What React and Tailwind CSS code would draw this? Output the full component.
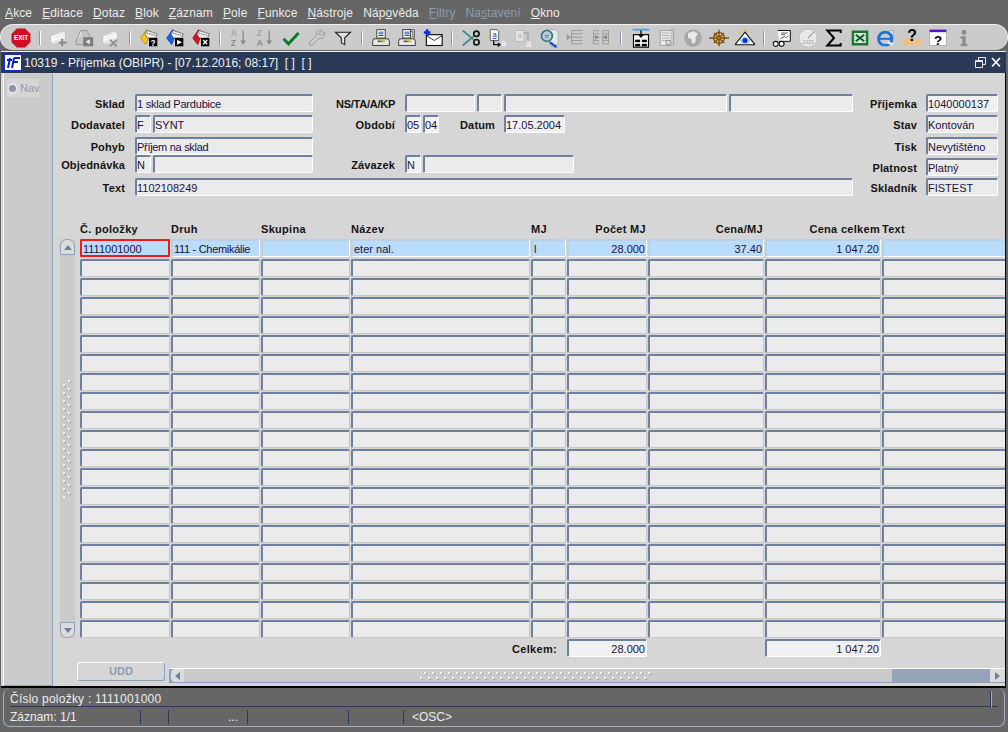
import React from "react";

const MENU = [
  ["", "A", "kce"], ["", "E", "ditace"], ["", "D", "otaz"], ["", "B", "lok"], ["", "Z", "áznam"], ["", "P", "ole"],
  ["", "F", "unkce"], ["", "N", "ástroje"], ["Náp", "o", "věda"], ["", "F", "iltry", true], ["Na", "s", "tavení", true], ["", "O", "kno"],
];

const Stripes = ({ c1, c2, c3 }) => (
  <g>
    <path d="M3 9 L18 3 L21 6 L21 16 L6 20 L3 17Z" fill={c1} stroke={c3} strokeWidth=".6" />
    <path d="M4 12 L20 7 M4 15 L20 10" stroke={c2} strokeWidth="1.6" />
  </g>
);

const Folder = ({ fill, dark, glyph }) => (
  <g>
    <path d="M2 12 L9 2 L14 5 L8 20Z" fill={fill} stroke={dark} strokeWidth=".7" />
    <path d="M7 7 L10 3 L22 7 L20 12 L10 12Z" fill="#eee" stroke="#333" strokeWidth=".7" />
    <path d="M9 6 L20 9" stroke="#555" strokeWidth="1" strokeDasharray="2 1" />
    <rect x="12" y="12" width="10" height="10" fill="#000" />
    {glyph}
  </g>
);

const Printer = ({ stack }) => (
  <g>
    {stack && <path d="M15 2h6v9h-2M13 4h6v7" fill="#ddd" stroke="#333" strokeWidth=".8" />}
    <rect x="7" y="2" width={stack ? 9 : 10} height="10" fill="#fff" stroke="#222" />
    <path d="M9 5h6M9 7h6M9 9h6" stroke="#0a28b0" strokeWidth="1" />
    <path d="M3 13h18l1 3v5H2v-5Z" fill="#e8e8e8" stroke="#222" />
    <path d="M8 16h3" stroke="#d02020" strokeWidth="2" />
    <path d="M11 16h3" stroke="#20a020" strokeWidth="2" />
    <path d="M14 16h3" stroke="#d0b020" strokeWidth="2" />
  </g>
);

const ICONS = {
  exit: (
    <g>
      <polygon points="7.5,2 16.5,2 22,7.5 22,16.5 16.5,22 7.5,22 2,16.5 2,7.5" fill="#d40f24" stroke="#a00" strokeWidth=".5" />
      <text x="12" y="14.5" textAnchor="middle" fontSize="7" fontWeight="700" fill="#fff" fontFamily="Liberation Sans">EXIT</text>
    </g>
  ),
  newDis: (
    <g>
      <Stripes c1="#e6e6e6" c2="#fff" c3="#aaa" />
      <path d="M17 13v9M13 17.5h9" stroke="#8f8f8f" strokeWidth="2.6" />
    </g>
  ),
  docDis: (
    <g>
      <path d="M2 17 L8 3 L15 3 L19 9 L19 20 L3 20Z" fill="#c4c4c4" stroke="#8e8e8e" />
      <path d="M6 9 L9 5 M5 13 L9 8" stroke="#eee" strokeWidth="1.2" />
      <rect x="11" y="11" width="12" height="11" fill="#7e7e7e" />
      <path d="M14 16.5 L19 13.5 V19.5Z" fill="#eee" />
    </g>
  ),
  delDis: (
    <g>
      <Stripes c1="#e6e6e6" c2="#fff" c3="#aaa" />
      <path d="M12 14 L20 22 M20 14 L12 22" stroke="#8f8f8f" strokeWidth="2.2" />
    </g>
  ),
  yellow: <Folder fill="#f8c810" dark="#b07000" glyph={<text x="17" y="21" textAnchor="middle" fontSize="10" fontWeight="700" fill="#fff" fontFamily="Liberation Sans">?</text>} />,
  blue: <Folder fill="#1464e8" dark="#0a2a90" glyph={<path d="M14.5 14 L20.5 17 L14.5 20Z" fill="#fff" />} />,
  red: <Folder fill="#e01020" dark="#800" glyph={<path d="M14.5 14.5 L19.5 19.5 M19.5 14.5 L14.5 19.5" stroke="#fff" strokeWidth="1.6" />} />,
  az: (
    <g fontSize="10" fontWeight="700" fontFamily="Liberation Sans">
      <text x="2" y="10" fill="#a6a6a6">A</text>
      <text x="2" y="21" fill="#8a8a8a">Z</text>
      <path d="M17 3v14" stroke="#8a8a8a" strokeWidth="1.6" />
      <path d="M13.5 15h7L17 20Z" fill="#8a8a8a" />
    </g>
  ),
  za: (
    <g fontSize="10" fontWeight="700" fontFamily="Liberation Sans">
      <text x="2" y="10" fill="#a6a6a6">Z</text>
      <text x="2" y="21" fill="#8a8a8a">A</text>
      <path d="M17 3v14" stroke="#8a8a8a" strokeWidth="1.6" />
      <path d="M13.5 15h7L17 20Z" fill="#8a8a8a" />
    </g>
  ),
  check: <path d="M3 13 L9 19 L21 6" fill="none" stroke="#0b7a2c" strokeWidth="3.4" />,
  wrench: <path d="M21 5 L16.5 9 L14 7 L18 3 C14 1.5 10.5 4 11.5 9 L3 17.5 L3 20 L6 21 L14 12.5 C19 14 22 10 21 5Z" fill="#ccc" stroke="#929292" strokeWidth="1.1" />,
  funnel: <path d="M3 5 H21 L14 12 V20 L10 18 V12Z" fill="#ddd" stroke="#222" strokeWidth="1.3" />,
  print: <Printer />,
  printAll: <Printer stack />,
  mail: (
    <g>
      <rect x="4" y="8" width="19" height="13" fill="#fff" stroke="#111" strokeWidth="1.4" />
      <path d="M4 9 L13.5 15 L23 9" fill="none" stroke="#111" />
      <path d="M5 1.5v8M1 5.5h8" stroke="#0830d8" strokeWidth="3" />
    </g>
  ),
  cut: (
    <g>
      <path d="M2 3 L15 14 M2 21 L15 10" stroke="#3c8a8a" strokeWidth="2" />
      <circle cx="18.5" cy="7" r="3.2" fill="none" stroke="#111" strokeWidth="2" />
      <circle cx="18.5" cy="17" r="3.2" fill="none" stroke="#111" strokeWidth="2" />
    </g>
  ),
  copy: (
    <g>
      <path d="M4 2h8l2 2v11H4Z" fill="#fff" stroke="#222" strokeWidth=".8" />
      <text x="9" y="11" textAnchor="middle" fontSize="9" fill="#0a28d0" fontFamily="Liberation Sans" textDecoration="underline">a</text>
      <path d="M8 15v5h7" fill="none" stroke="#111" strokeWidth="1.6" />
      <path d="M13 17l4 3-4 3Z" fill="#111" />
      <text x="20" y="22" textAnchor="middle" fontSize="10" fill="#fff" fontFamily="Liberation Sans">a</text>
    </g>
  ),
  pasteDis: (
    <g>
      <rect x="3" y="3" width="10" height="13" fill="#e4e4e4" stroke="#bbb" />
      <text x="8" y="12" textAnchor="middle" fontSize="9" fill="#aaa" fontFamily="Liberation Sans">a</text>
      <path d="M18 6v9M13 6h5" fill="none" stroke="#999" strokeWidth="1.4" />
      <text x="19" y="23" textAnchor="middle" fontSize="10" fill="#fff" fontFamily="Liberation Sans">a</text>
    </g>
  ),
  search: (
    <g>
      <path d="M8 2h12l3 3v14l-8 3Z" fill="#e8e8e8" stroke="#aaa" />
      <path d="M13 17 L21 23" stroke="#1c55c4" strokeWidth="3" />
      <circle cx="9.5" cy="9.5" r="6.5" fill="#bcd" stroke="#2a7a84" strokeWidth="2" />
      <path d="M7 9h5M7 11h4" stroke="#667" />
    </g>
  ),
  lines: (
    <g>
      <path d="M8 3h13M8 7h13M8 11h13M8 15h13M8 19h13M8 3v16" stroke="#9a9a9a" strokeWidth="1.2" />
      <path d="M2 7 L7 11 L2 15Z" fill="#9a9a9a" />
    </g>
  ),
  linesTwo: (
    <g>
      <path d="M3 3h7M3 7h7M3 11h7M3 15h7M3 19h7M3 3v17M14 3h7M14 7h7M14 11h7M14 15h7M14 19h7M21 3v17M14 3v17" stroke="#9a9a9a" strokeWidth="1.1" />
      <path d="M5 8 L10 11 L5 14ZM19 8 L14 11 L19 14Z" fill="#8a8a8a" />
    </g>
  ),
  form: (
    <g>
      <rect x="3" y="8" width="18" height="15" fill="#fff" stroke="#000" strokeWidth="1.4" />
      <path d="M2 2h20" stroke="#4aa0e8" strokeWidth="2" />
      <rect x="5" y="14" width="6" height="3" fill="#000" />
      <rect x="13" y="14" width="6" height="3" fill="#000" />
      <rect x="5" y="19" width="6" height="3" fill="#000" />
      <rect x="13" y="19" width="6" height="3" fill="#000" />
      <path d="M12 3v7" stroke="#000" strokeWidth="1.6" />
      <path d="M8.5 8h7L12 12Z" fill="#000" />
    </g>
  ),
  page: (
    <g>
      <path d="M4 3h13v18H4Z" fill="#e8e8e8" stroke="#9a9a9a" />
      <path d="M17 2h3v18l-3 1" fill="#ccc" stroke="#9a9a9a" />
      <path d="M6 6h9M6 9h9M6 12h9M6 15h5" stroke="#a8a8a8" />
      <path d="M11 15h5v5h-5Z" fill="#ddd" stroke="#888" />
    </g>
  ),
  globe: (
    <g>
      <circle cx="12" cy="12" r="10.5" fill="#a8a8a8" />
      <path d="M6 6 L13 4 L18 7 L15 11 L15 17 L11 19 L10 13 L6 12Z" fill="#eaeaea" />
    </g>
  ),
  helm: (
    <g fill="none" stroke="#8a5208" strokeWidth="1.8">
      <circle cx="12" cy="12" r="6.5" />
      <path d="M0 12h24M12 2v20M6 6l12 12M18 6L6 18" />
      <circle cx="12" cy="12" r="2" fill="#c89030" />
    </g>
  ),
  eye: (
    <g>
      <path d="M3 4 L6 7M21 4 L18 7M12 1v3M8 2l1 3M16 2l-1 3" stroke="#d8c010" strokeWidth="1.1" />
      <path d="M12 5 L24 20 H0Z" fill="#fff" stroke="#111" strokeWidth="1.3" />
      <ellipse cx="12" cy="15" rx="6" ry="4.5" fill="#a8d0f0" />
      <circle cx="12" cy="15" r="3" fill="#0830d8" />
    </g>
  ),
  glasses: (
    <g>
      <path d="M7 3h15v13H9" fill="#fff" stroke="#111" strokeWidth="1.2" />
      <path d="M11 6h8M11 8h5M10 13l5-3 2 2 3-3" stroke="#444" fill="none" />
      <circle cx="4.5" cy="19" r="3" fill="#fff" stroke="#111" strokeWidth="1.3" />
      <circle cx="11.5" cy="19" r="3" fill="#fff" stroke="#111" strokeWidth="1.3" />
    </g>
  ),
  clock: (
    <g>
      <circle cx="12" cy="12" r="11" fill="#e8e8e8" stroke="#b4b4b4" />
      <path d="M12 12 L19 5" stroke="#a0a0a0" strokeWidth="1.5" />
      <text x="12" y="19" textAnchor="middle" fontSize="6" fill="#999" fontFamily="Liberation Sans">1315</text>
    </g>
  ),
  sigma: <path d="M20 6 V3 H4 L12 12 L4 21 H20 V18" fill="none" stroke="#000" strokeWidth="2.4" />,
  excel: (
    <g>
      <rect x="2" y="3" width="20" height="18" fill="#1a7a30" />
      <rect x="5" y="6" width="14" height="12" fill="#d8e8d8" />
      <path d="M7 8 L17 16 M17 8 L7 16" stroke="#0a5a20" strokeWidth="2.2" />
    </g>
  ),
  ie: (
    <g>
      <path d="M16 3h5v5h-5Z" fill="#dde" stroke="#9ab" />
      <circle cx="11" cy="13" r="8" fill="none" stroke="#1874d8" strokeWidth="3.4" />
      <path d="M4 13h15" stroke="#1874d8" strokeWidth="2.4" />
      <path d="M14 17 L20 20" stroke="#e8eef8" strokeWidth="3" />
      <path d="M2 22h18" stroke="#b0c0d8" />
    </g>
  ),
  help: (
    <g>
      <rect x="1" y="13" width="7" height="8" fill="#f4c078" />
      <rect x="9" y="13" width="6" height="8" fill="#f4c078" />
      <rect x="17" y="13" width="6" height="8" fill="#f4c078" />
      <text x="12" y="16" textAnchor="middle" fontSize="19" fontWeight="700" fill="#000" fontFamily="Liberation Sans">?</text>
    </g>
  ),
  helpWin: (
    <g>
      <rect x="2" y="2" width="20" height="19" fill="#fff" stroke="#aaa" />
      <rect x="2" y="2" width="20" height="3" fill="#5a10d0" />
      <text x="12" y="20" textAnchor="middle" fontSize="16" fontWeight="700" fill="#000" fontFamily="Liberation Sans">?</text>
    </g>
  ),
  info: (
    <g fill="#8c8c8c">
      <circle cx="12" cy="5" r="3" />
      <path d="M8 10h6v9h2v3H8v-3h2v-6H8Z" />
    </g>
  ),
};

const Ico = ({ name }) => (
  <div className="w-[26px] h-[26px] flex items-center justify-center shrink-0">
    <svg className={name === "exit" ? "w-[22px] h-[22px]" : "w-[20px] h-[20px]"} viewBox="0 0 24 24">{ICONS[name]}</svg>
  </div>
);

const Sep = ({ w }) => (
  <div className={`${w} flex justify-center shrink-0`}>
    <div className="w-[2px] h-[14px] bg-[#8296b4] border-r border-white" />
  </div>
);

const TOOLBAR = [
  ["w-[0px]", ["exit"]],
  ["w-[11px]", ["newDis", "docDis", "delDis"]],
  ["w-[13px]", ["yellow", "blue", "red"]],
  ["w-[12px]", ["az", "za", "check", "wrench", "funnel"]],
  ["w-[12px]", ["print", "printAll", "mail"]],
  ["w-[12px]", ["cut", "copy", "pasteDis", "search", "lines", "linesTwo"]],
  ["w-[14px]", ["form", "page", "globe", "helm", "eye"]],
  ["w-[11px]", ["glasses", "clock", "sigma", "excel", "ie", "help", "helpWin", "info"]],
];

// small field with the sunken look of the forms runtime
const Field = ({ w, children, right, cur, className = "" }) => (
  <div
    className={`h-[18px] shrink-0 rounded-[2px] border-t-2 border-l-2 border-r border-b border-t-[#6d80a0] border-l-[#6d80a0] border-r-white border-b-white pr-[1px] text-[11px] leading-[16px] text-[#1c1040] whitespace-nowrap overflow-hidden ${cur ? "bg-[#f0f0f0]" : "bg-[#ebebeb]"} ${right ? "text-right" : ""} ${w || ""} ${className}`}
  >
    {children}
  </div>
);

const Label = ({ w, children, className = "tracking-[0.15px]" }) => (
  <div className={`${w} ${className} h-[18px] shrink-0 text-right text-[11px] font-bold leading-[20px] text-[#141414] whitespace-nowrap`}>{children}</div>
);

const GRID = "grid grid-cols-[90px_89px_89px_179px_35px_80px_116px_116px_124px] gap-x-[1px]";

const Head = ({ children, right }) => (
  <div className={`text-[11px] font-bold tracking-[0.3px] leading-[14px] text-[#141414] whitespace-nowrap ${right ? "text-right pr-[1px]" : ""}`}>{children}</div>
);

const EMPTY_ROWS = Array.from({ length: 20 }, (_, i) => i);

const Cell = ({ children, right, className = "" }) => (
  <div className={`h-[18px] rounded-[2px] border-t-2 border-l-2 border-r border-b border-t-[#bcd0e4] border-l-[#bcd0e4] border-r-white border-b-white bg-[#badcfb] pl-[1px] pr-[1px] text-[11px] leading-[16px] text-[#1c1040] whitespace-nowrap overflow-hidden ${right ? "text-right" : ""} ${className}`}>
    {children}
  </div>
);

const EmptyCell = () => (
  <div className="h-[18px] rounded-[2px] border-t-2 border-l-2 border-r border-b border-t-[#6d80a0] border-l-[#6d80a0] border-r-[#c8c8c8] border-b-[#c8c8c8] bg-[#ebebeb]" />
);

const VGrip = () => (
  <svg width="11" height="118" viewBox="0 0 11 118">
    {Array.from({ length: 15 }, (_, i) => (
      <g key={i}>
        <rect x="2" y={5 + i * 8} width="2" height="2" fill="#a9a9a9" />
        <rect x="7" y={1 + i * 8} width="2" height="2" fill="#a9a9a9" />
        <rect x="1" y={4 + i * 8} width="2" height="2" fill="#f4f4f4" />
        <rect x="6" y={i * 8} width="2" height="2" fill="#f4f4f4" />
      </g>
    ))}
  </svg>
);

const HGrip = () => (
  <svg width="236" height="8" viewBox="0 0 236 8">
    {Array.from({ length: 29 }, (_, i) => (
      <g key={i}>
        <rect x={5 + i * 8} y="1" width="2" height="2" fill="#a9a9a9" />
        <rect x={1 + i * 8} y="6" width="2" height="2" fill="#a9a9a9" />
        <rect x={4 + i * 8} y="0" width="2" height="2" fill="#f4f4f4" />
        <rect x={i * 8} y="5" width="2" height="2" fill="#f4f4f4" />
      </g>
    ))}
  </svg>
);

export default function App() {
  return (
    <div className="w-[1008px] h-[732px] flex flex-col overflow-hidden bg-[#666666] [font-family:'Liberation_Sans',Arial,sans-serif]">
      {/* menu */}
      <div className="h-[24px] shrink-0 flex items-center gap-[10px] pl-[5px] pt-[2px] text-[12px] tracking-[0.12px] text-[#ececec]">
        {MENU.map(([a, u, b, off], i) => (
          <span key={i} className={off ? "text-[#8e9caf]" : ""}>
            {a}<span className="underline">{u}</span>{b}
          </span>
        ))}
      </div>

      {/* toolbar */}
      <div className="h-[26px] shrink-0 flex items-center pl-[7px] bg-[#cbcbcb] rounded-l-[13px] rounded-r-[13px] border-t border-l border-r border-[#f0f0f0] border-b-0">
        {TOOLBAR.map(([sep, group], i) => (
          <React.Fragment key={i}>
            {i > 0 && <Sep w={sep} />}
            {group.map((name) => <Ico key={name} name={name} />)}
          </React.Fragment>
        ))}
      </div>

      {/* window */}
      <div className="flex-1 min-h-0 flex flex-col ml-[1px] mr-[2px] mt-[1px]">
        <div className="h-[22px] shrink-0 flex items-center bg-[#2a3a56] pl-[3px] pr-[4px] text-[12px] text-[#f0f0f0] border-t border-[#f4f4f4]">
          <div className="w-[18px] h-[17px] bg-white border border-[#1030c0] flex items-center justify-center mr-[2px] shrink-0">
            <svg width="15" height="13" viewBox="0 0 15 13">
              <path d="M1 4h5M4 2L2 12M8 2h6M8 2L6 12M7 6h5" fill="none" stroke="#0820c8" strokeWidth="2" />
            </svg>
          </div>
          <span className="flex-1">10319 - Příjemka (OBIPR) - [07.12.2016; 08:17]&nbsp; [ ]&nbsp; [ ]</span>
          <svg width="30" height="13" viewBox="0 0 30 13" fill="none">
            <path d="M3.5 4.5h7v7h-7ZM3.5 5.5h7M6.5 4V1.5h7v7H11" stroke="#e8e8e8" />
            <path d="M20 2 L28 10.5 M28 2 L20 10.5" stroke="#f4f4f4" strokeWidth="1.8" />
          </svg>
        </div>

        <div className="flex-1 min-h-0 flex bg-[#d6d6d6] border-b-2 border-b-black border-r border-r-black">
          {/* nav */}
          <div className="w-[50px] ml-[2px] shrink-0 bg-[#cbcbcb] border-l border-l-white border-r border-r-[#8ba0bc] border-b border-b-[#8ba0bc] rounded-tr-[3px] pl-[3px] pt-[6px]">
            <div className="w-[32px] h-[18px] bg-[#d6d6d6] flex items-center gap-[2px]">
              <span className="w-[11px] h-[11px] rounded-full bg-[#8a96a8] border-2 border-[#e4e4e4] shrink-0" />
              <span className="text-[11px] text-[#8e9caf]">Nav</span>
            </div>
          </div>

          <div className="flex-1 min-w-0 flex flex-col overflow-hidden">
            {/* form */}
            <div className="flex pt-[21px] h-[140px] shrink-0">
              <div className="w-[800px] shrink-0 flex flex-col">
                <div className="flex">
                  <div className="w-[260px] shrink-0 flex flex-col">
                    <div className="flex gap-[10px]"><Label w="w-[72px]">Sklad</Label><Field w="w-[178px]" className="tracking-[-0.2px]">1 sklad Pardubice</Field></div>
                    <div className="flex gap-[10px] mt-[3px]">
                      <Label w="w-[72px]">Dodavatel</Label>
                      <div className="flex gap-[2px]"><Field w="w-[16px]">F</Field><Field w="w-[160px]">SYNT</Field></div>
                    </div>
                    <div className="flex gap-[10px] mt-[4px]"><Label w="w-[72px]">Pohyb</Label><Field w="w-[178px]" className="tracking-[-0.3px]">Příjem na sklad</Field></div>
                    <div className="flex gap-[10px] mt-[0px]">
                      <Label w="w-[72px]">Objednávka</Label>
                      <div className="flex gap-[2px]"><Field w="w-[16px]">N</Field><Field w="w-[160px]"></Field></div>
                    </div>
                  </div>
                  <div className="flex-1 min-w-0 flex flex-col">
                    <div className="flex gap-[10px]">
                      <Label w="w-[82px]" className="tracking-[-0.25px]">NS/TA/A/KP</Label>
                      <div className="flex gap-[2px]">
                        <Field w="w-[70px]"></Field><Field w="w-[25px]"></Field><Field w="w-[223px]"></Field><Field w="w-[124px]"></Field>
                      </div>
                    </div>
                    <div className="flex gap-[10px] mt-[3px]">
                      <Label w="w-[82px]">Období</Label>
                      <div className="flex gap-[2px]">
                        <Field w="w-[16px]" cur>05</Field><Field w="w-[16px]" cur>04</Field>
                        <Label w="w-[61px]" className="pr-[7px] tracking-[0.15px]">Datum</Label>
                        <Field w="w-[61px]" cur>17.05.2004</Field>
                      </div>
                    </div>
                    <div className="flex gap-[10px] mt-[22px]">
                      <Label w="w-[82px]">Závazek</Label>
                      <div className="flex gap-[2px]"><Field w="w-[16px]" cur>N</Field><Field w="w-[151px]"></Field></div>
                    </div>
                  </div>
                </div>
                <div className="flex gap-[10px] mt-[5px]"><Label w="w-[72px]">Text</Label><Field w="w-[718px]">1102108249</Field></div>
              </div>
              <div className="flex flex-col">
                <div className="flex gap-[9px]"><Label w="w-[64px]">Příjemka</Label><Field w="w-[72px]" cur>1040000137</Field></div>
                <div className="flex gap-[9px] mt-[3px]"><Label w="w-[64px]">Stav</Label><Field w="w-[72px]">Kontován</Field></div>
                <div className="flex gap-[9px] mt-[4px]"><Label w="w-[64px]">Tisk</Label><Field w="w-[72px]">Nevytištěno</Field></div>
                <div className="flex gap-[9px] mt-[3px]"><Label w="w-[64px]">Platnost</Label><Field w="w-[72px]">Platný</Field></div>
                <div className="flex gap-[9px] mt-[2px]"><Label w="w-[64px]">Skladník</Label><Field w="w-[72px]">FISTEST</Field></div>
              </div>
            </div>

            {/* table */}
            <div className={`${GRID} ml-[27px] mt-[9px] shrink-0 w-[1000px]`}>
              <Head>Č. položky</Head><Head>Druh</Head><Head>Skupina</Head><Head>Název</Head><Head>MJ</Head>
              <Head right>Počet MJ</Head><Head right>Cena/MJ</Head><Head right>Cena celkem</Head><Head>Text</Head>
            </div>
            <div className="flex mt-[3px] ml-[7px] shrink-0">
              <div className="w-[15px] h-[399px] shrink-0 bg-[#cbcbcb] flex flex-col items-center justify-between">
                <div className="w-[15px] h-[16px] bg-[#dcdcdc] border border-[#8ba0bc] border-b-[#8ba0bc] rounded-t-[7px] flex items-center justify-center">
                  <span className="w-0 h-0 border-l-[4px] border-r-[4px] border-b-[5px] border-l-transparent border-r-transparent border-b-[#6d80a0]" />
                </div>
                <VGrip />
                <div className="w-[15px] h-[16px] bg-[#dcdcdc] border border-[#8ba0bc] rounded-b-[7px] flex items-center justify-center">
                  <span className="w-0 h-0 border-l-[4px] border-r-[4px] border-t-[5px] border-l-transparent border-r-transparent border-t-[#6d80a0]" />
                </div>
              </div>
              <div className="ml-[5px] flex flex-col w-[930px]">
                <div className={`${GRID} mb-[2px]`}>
                  <div className="h-[18px] rounded-[1px] border-2 border-[#ee1c1c] bg-[#badcfb] pl-[1px] text-[11px] leading-[16px] text-[#1c1040]">1111001000</div>
                  <Cell className="tracking-[-0.3px]">111 - Chemikálie</Cell>
                  <Cell></Cell>
                  <Cell>eter nal.</Cell>
                  <Cell>l</Cell>
                  <Cell right>28.000</Cell>
                  <Cell right>37.40</Cell>
                  <Cell right>1 047.20</Cell>
                  <Cell></Cell>
                </div>
                <div className={`${GRID} gap-y-[1px]`}>
                  {EMPTY_ROWS.flatMap((r) => Array.from({ length: 9 }, (_, c) => <EmptyCell key={`${r}-${c}`} />))}
                </div>
              </div>
            </div>

            {/* totals */}
            <div className={`${GRID} ml-[27px] mt-[1px] shrink-0 w-[1000px]`}>
              <div className="col-span-5 text-right pr-[9px] text-[11px] font-bold tracking-[0.3px] leading-[20px] text-[#141414]">Celkem:</div>
              <Field right cur>28.000</Field>
              <div />
              <Field right cur>1 047.20</Field>
              <div />
            </div>

            {/* bottom */}
            <div className="flex items-start ml-[24px] mt-[3px] shrink-0">
              <div className="w-[88px] h-[19px] shrink-0 rounded-[3px] bg-[#d6d6d6] border border-t-white border-l-white border-r-[#8ba0bc] border-b-[#8ba0bc] text-center text-[11px] font-bold leading-[17px] text-[#8e9caf]">UDD</div>
              <div className="ml-[4px] mt-[6px] w-[836px] h-[15px] flex shrink-0 border-t border-t-white border-b border-b-[#8ba0bc] bg-[#95a4b8]">
                <div className="w-[15px] bg-[#dcdcdc] rounded-l-[5px] border-l-2 border-[#8ba0bc] flex items-center justify-center">
                  <span className="w-0 h-0 border-t-[4px] border-b-[4px] border-r-[5px] border-t-transparent border-b-transparent border-r-[#6d80a0]" />
                </div>
                <div className="w-[708px] bg-[#cbcbcb] flex items-center justify-center"><HGrip /></div>
                <div className="flex-1" />
                <div className="w-[15px] bg-[#dcdcdc] flex items-center justify-center">
                  <span className="w-0 h-0 border-t-[4px] border-b-[4px] border-l-[5px] border-t-transparent border-b-transparent border-l-[#6d80a0]" />
                </div>
              </div>
            </div>
          </div>
        </div>
      </div>

      {/* status */}
      <div className="h-[44px] shrink-0 flex flex-col pb-[6px] text-[12px] text-[#ececec]">
        <div className="mx-[3px] flex-1 flex flex-col border-l border-r border-b border-[#a0aebf] rounded-l-[7px] rounded-r-[7px] pl-[6px] pr-[6px]">
          <div className="h-[19px] pt-[3px] flex items-center justify-between border-b border-[#2a3a56]">
            <span className="tracking-[0.23px]">Číslo položky : 1111001000</span>
            <span className="w-[2px] h-[16px] border-l border-r border-l-[#2a3a56] border-r-[#a0aebf] mr-[6px]" />
          </div>
          <div className="flex-1 pt-[1px] flex items-center">
            <span className="w-[130px] shrink-0">Záznam: 1/1</span>
            <span className="w-[28px] shrink-0 h-[14px] border-l border-[#2a3a56]" />
            <span className="w-[79px] shrink-0 h-[14px] border-l border-[#2a3a56] text-right pr-[9px] leading-[14px]">...</span>
            <span className="w-[101px] shrink-0 h-[14px] border-l border-[#2a3a56]" />
            <span className="w-[55px] shrink-0 h-[14px] border-l border-[#2a3a56]" />
            <span className="pl-[8px] border-l border-[#2a3a56] leading-[14px]">&lt;OSC&gt;</span>
          </div>
        </div>
      </div>
    </div>
  );
}
